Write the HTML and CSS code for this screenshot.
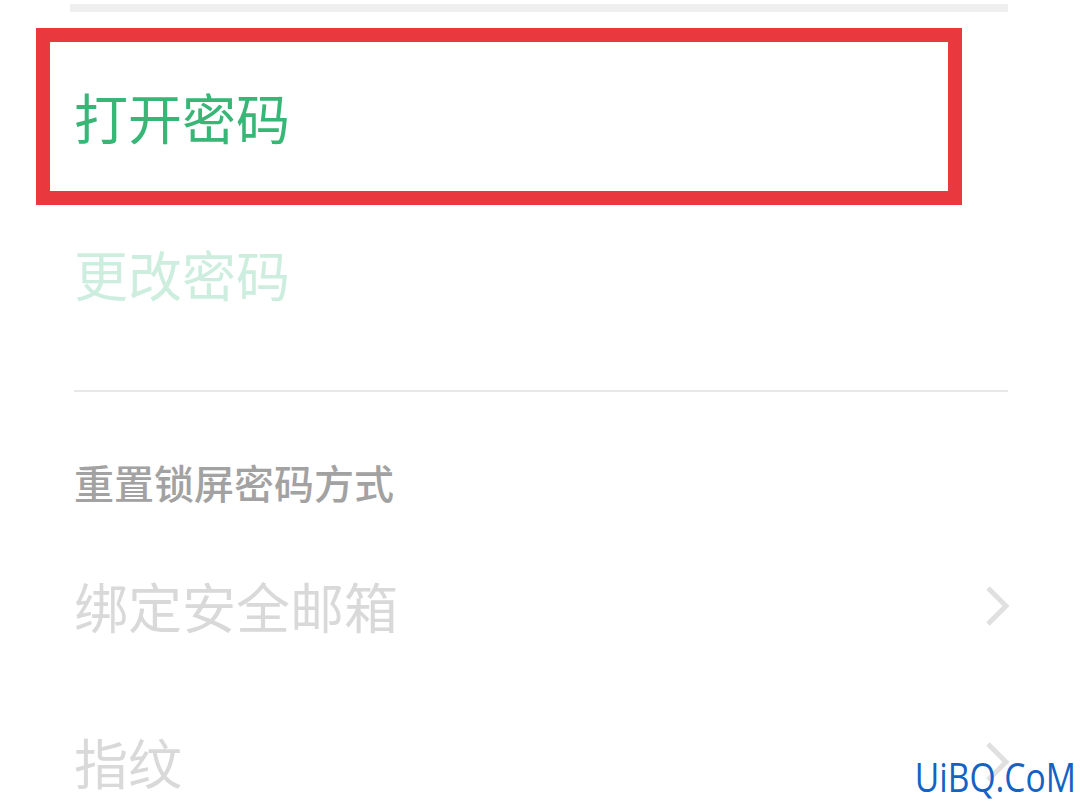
FILE: index.html
```html
<!DOCTYPE html>
<html lang="zh-CN">
<head>
    <meta charset="UTF-8">
    <title>锁屏密码</title>
    <link rel="stylesheet" href="styles.css">
</head>
<body>
    <div class="screen">
        <div class="topline"></div>

        <div class="marked">
            <span class="label on">打开密码</span>
        </div>

        <div class="item">
            <span class="label off">更改密码</span>
        </div>

        <div class="divider"></div>

        <div class="section">重置锁屏密码方式</div>

        <div class="item link">
            <span class="label dim">绑定安全邮箱</span>
            <svg class="chevron" viewBox="0 0 26 42"><polyline points="4,3 22,21 4,39"/></svg>
        </div>
        <div class="item link">
            <span class="label dim">指纹</span>
            <svg class="chevron" viewBox="0 0 26 42"><polyline points="4,3 22,21 4,39"/></svg>
        </div>

        <div class="watermark">UiBQ.CoM</div>
    </div>
</body>
</html>
```

FILE: styles.css
```css
body {
    margin: 0;
    background: #fff;
    font-family: "Noto Sans CJK SC", "Noto Sans", sans-serif;
}
.screen {
    position: relative;
    width: 1080px;
    height: 810px;
    overflow: hidden;
}
.topline {
    margin: 4px 72px 0 70px;
    height: 8px;
    background: #efefef;
}
.marked {
    margin: 16px 0 0 36px;
    width: 874px;
    height: 149px;
    border: 14px solid #e9383e;
    display: flex;
    align-items: center;
    padding-left: 24px;
}
.label {
    font-size: 54px;
    line-height: 1;
}
.on { color: #38b676; }
.off { color: #cdeedf; }
.dim { color: #d9d9d9; }
.item {
    height: 138px;
    display: flex;
    align-items: center;
    justify-content: space-between;
    padding: 0 70px 0 74px;
}
.item.link {
    height: 156px;
}
.divider {
    margin: 47px 72px 0 74px;
    height: 2px;
    background: #e8e8e8;
}
.section {
    margin: 70px 0 26px 74px;
    font-size: 40px;
    font-weight: 500;
    line-height: 1;
    color: #a2a2a2;
}
.chevron {
    width: 26px;
    height: 42px;
    fill: none;
    stroke: #e0e0e0;
    stroke-width: 5;
}
.watermark {
    position: absolute;
    right: 4px;
    bottom: 6px;
    font-family: "Open Sans", sans-serif;
    font-size: 40px;
    color: #1462c4;
    transform: scaleX(0.84);
    transform-origin: right bottom;
}
```
